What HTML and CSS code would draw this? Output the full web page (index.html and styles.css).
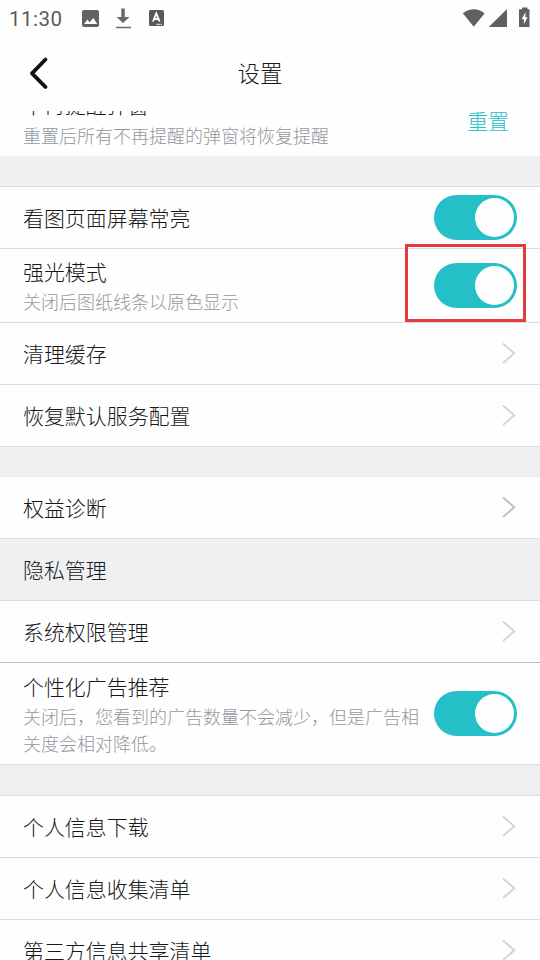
FILE: index.html
```html
<!DOCTYPE html>
<html lang="zh-CN">
<head>
<meta charset="utf-8">
<title>设置</title>
<link rel="stylesheet" href="styles.css">
</head>
<body>
<svg width="0" height="0" class="defs"><symbol id="chevron" viewBox="0 0 16 24"><path d="M2 2.500 13.300 12.300 2 22" fill="none" stroke="currentColor" stroke-width="1.900"/></symbol></svg>
<div class="status">
  <span class="time">11:30</span>
  <svg class="notices" width="84" height="24" viewBox="0 0 84 24">
    <rect x="1" y="4" width="17" height="17" rx="2" fill="#626262"/>
    <path d="M3 18 6.500 13.500 8.500 16.200 12.300 12 16.300 18Z" fill="#fff"/>
    <path d="M40.300 2.500h3.500v8.500h4.700l-6.500 6-6.500-6h4.800Z" fill="#696969"/>
    <path d="M35 21.500h15" stroke="#696969" stroke-width="1.500"/>
    <rect x="68" y="4" width="15" height="16" rx="1.500" fill="#595959"/>
    <path d="M72 15.500 75.300 7.500 78.600 15.500M73.300 13h4" fill="none" stroke="#fff" stroke-width="1.900"/>
    <path d="M75.500 18.300h6" stroke="#fff" stroke-width="1.200" stroke-dasharray="1.300 .8"/>
  </svg>
  <svg class="signals" width="70" height="24" viewBox="0 0 70 24">
    <path d="M1.800 7.300Q12.700-.7 23.700 7.300L12.800 20.800Z" fill="#606060"/>
    <path d="M46 3v18H27.800Z" fill="#606060"/>
    <path d="M61 1.500h5.500v1.700H68.500V21H58V3.200H61Z" fill="#606060"/>
    <path d="M64.700 6 60.500 13.300h2.400v5l3.700-7h-2.300Z" fill="#fff"/>
  </svg>
</div>
<header class="nav">
  <svg class="back" width="22" height="34" viewBox="0 0 22 34"><path d="M18.500 3.500 5 17.300 18.500 31" fill="none" stroke="#111" stroke-width="3.800" stroke-linecap="round" stroke-linejoin="round"/></svg>
  <h1>设置</h1>
</header>
<main class="list">
  <section class="row reset">
    <div class="text"><div class="title">不再提醒弹窗</div><div class="desc">重置后所有不再提醒的弹窗将恢复提醒</div></div>
    <span class="action">重置</span>
  </section>
  <div class="gap lined"></div>
  <section class="row"><div class="title">看图页面屏幕常亮</div><span class="switch"></span></section>
  <section class="row glare">
    <div class="text"><div class="title">强光模式</div><div class="desc">关闭后图纸线条以原色显示</div></div>
    <span class="switch"></span>
    <span class="marker"></span>
  </section>
  <section class="row"><div class="title">清理缓存</div><svg class="chev"><use href="#chevron"/></svg></section>
  <section class="row"><div class="title">恢复默认服务配置</div><svg class="chev"><use href="#chevron"/></svg></section>
  <div class="gap"></div>
  <section class="row"><div class="title">权益诊断</div><svg class="chev dark"><use href="#chevron"/></svg></section>
  <section class="row pressed"><div class="title">隐私管理</div></section>
  <section class="row strong"><div class="title">系统权限管理</div><svg class="chev"><use href="#chevron"/></svg></section>
  <section class="row ads">
    <div class="text"><div class="title">个性化广告推荐</div><div class="desc">关闭后，您看到的广告数量不会减少，但是广告相关度会相对降低。</div></div>
    <span class="switch"></span>
  </section>
  <div class="gap lined"></div>
  <section class="row"><div class="title">个人信息下载</div><svg class="chev"><use href="#chevron"/></svg></section>
  <section class="row"><div class="title">个人信息收集清单</div><svg class="chev"><use href="#chevron"/></svg></section>
  <section class="row"><div class="title">第三方信息共享清单</div><svg class="chev"><use href="#chevron"/></svg></section>
</main>
</body>
</html>
```
FILE: styles.css
```css
* { box-sizing: border-box; }
body {
  margin: 0;
  width: 540px;
  height: 960px;
  overflow: hidden;
  display: flex;
  flex-direction: column;
  background: #fefefe;
  color: #17181a;
  font-family: "Noto Sans CJK SC", sans-serif;
  font-weight: 300;
}
.defs { position: absolute; }
.status {
  flex: none;
  height: 38px;
  padding: 6px 9px 0;
  display: flex;
  align-items: flex-start;
}
.time {
  width: 72px;
  font: 400 20.5px/26px Roboto, sans-serif;
  letter-spacing: 0.5px;
  color: #5a5a5a;
}
.signals { margin-left: auto; }
.nav {
  flex: none;
  height: 73px;
  padding-bottom: 5px;
  display: grid;
  grid-template-columns: 70px 1fr 90px;
  align-items: center;
}
.back { margin: 2px 0 0 27px; }
.nav h1 {
  margin: 0;
  text-align: center;
  font-size: 22.4px;
  font-weight: 300;
  line-height: 32px;
}
.list { flex: 1; min-height: 0; overflow: hidden; }
.row {
  position: relative;
  height: 62px;
  padding: 0 23px;
  display: flex;
  align-items: center;
  justify-content: space-between;
  border-bottom: 1px solid #dcdddf;
}
.title { font-size: 20.95px; line-height: 30px; white-space: nowrap; }
.row > .title { padding-bottom: 2px; }
.text .title { margin-bottom: 2px; }
.desc { font-size: 18px; line-height: 27px; color: #94989e; }
.reset { height: 45px; border: 0; padding-right: 31px; }
.reset .text { align-self: flex-end; margin-bottom: 7px; }
.reset .title { margin-bottom: 3px; }
.reset .action { font-size: 20.9px; line-height: 30px; color: #25bfcc; margin-top: -27px; }
.glare { height: 74px; }
.ads { height: 102px; }
.ads .desc { width: 398px; }
.strong { border-color: #b8babb; }
.pressed { background: #eff0f2; }
.gap { height: 30px; background: #eff0f2; }
.lined { height: 31px; border-bottom: 1px solid #dcdddf; }
.switch {
  flex: none;
  width: 83px;
  height: 45px;
  padding: 3px;
  display: flex;
  justify-content: flex-end;
  border-radius: 23px;
  background: #25bfc7;
}
.switch::after {
  content: "";
  width: 39px;
  height: 39px;
  border-radius: 50%;
  background: #fefefe;
}
.marker {
  position: absolute;
  left: 405px;
  top: -5px;
  width: 121px;
  height: 78px;
  border: 3px solid #e53b3c;
}
.chev { width: 16px; height: 24px; margin-bottom: 2px; color: #d2d3d6; }
.dark { color: #bdbec0; }
```
